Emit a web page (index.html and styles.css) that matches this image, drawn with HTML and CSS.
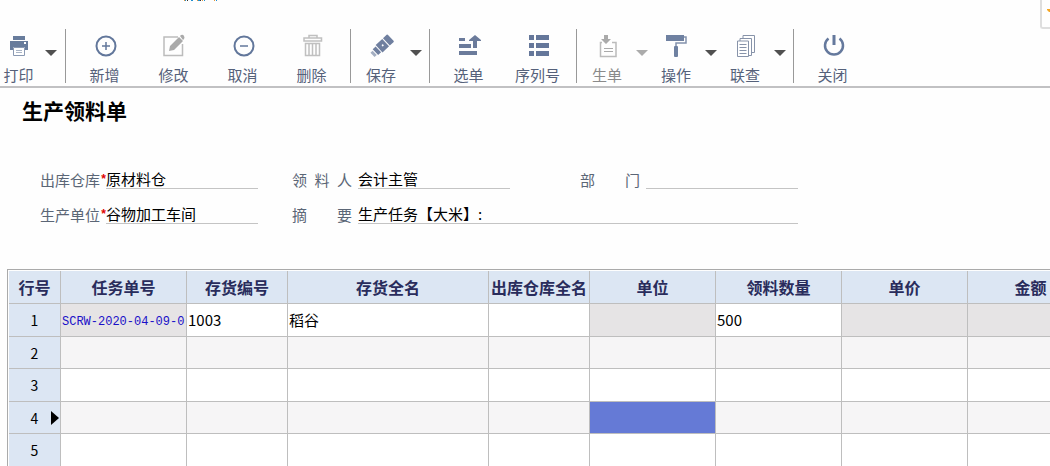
FILE: index.html
```
<!DOCTYPE html>
<html lang="zh-CN">
<head>
<meta charset="utf-8">
<title>生产领料单</title>
<link rel="stylesheet" href="styles.css">
</head>
<body>
<header class="topbar">
  <svg class="crumb" width="36" height="1" viewBox="0 0 36 1" aria-hidden="true"><path fill="#1f8fd0" d="M1 0h1v1h-1zM7 0h2v1h-2zM14 0h2v1h-2zM20 0h1v1h-1zM32 0h1v1h-1z"/><path fill="#333" d="M3 0h1v1h-1zM16 0h1v1h-1z"/><path fill="#e8973a" d="M0 0h1v1h-1zM13 0h1v1h-1zM18 0h1v1h-1zM30 0h1v1h-1z"/></svg>
  <div class="side-tab"><svg width="8" height="27" viewBox="0 0 8 27" aria-hidden="true"><path fill="#f5a623" d="M5 9h3v3H7L5 10z"/></svg></div>
</header>
<nav class="toolbar">
  <div class="group group-first">
    <button class="tool print" type="button"><svg width="26" height="26" viewBox="0 0 26 26"><path fill="#687c9c" d="M7 3h12v4H7zM4 8h18v9h-3v-3H7v3H4z"/><path fill="#fff" d="M18 9h2v2h-2z"/><path fill="#fff" stroke="#8a99b2" d="M7.500 14.500h11v8h-11z"/><path stroke="#a9b4c5" d="M10 17.500h6M10 19.500h6"/></svg>打印</button><button class="caret" type="button" aria-label="打印选项"></button>
  </div>
  <div class="group">
    <button class="tool" type="button"><svg width="26" height="26" viewBox="0 0 26 26" fill="none" stroke="#62779b"><circle cx="14" cy="13" r="9.500" stroke-width="2"/><path stroke-width="1.500" d="M10 13h8M14 9v8"/></svg>新增</button>
    <button class="tool" type="button"><svg width="26" height="26" viewBox="0 0 26 26"><path fill="none" stroke="#bcbcbc" stroke-width="1.500" d="M17 4H3v18.500h18.500V11"/><path fill="#aaa" d="M8 18l1-5 9-9 4 4-9 9zM19 3l1-1q2-1 3 1t0 3l-1 1z"/></svg>修改</button>
    <button class="tool" type="button"><svg width="26" height="26" viewBox="0 0 26 26" fill="none" stroke="#62779b"><circle cx="14" cy="13" r="9.500" stroke-width="2"/><path stroke-width="1.500" d="M10 13h8"/></svg>取消</button>
    <button class="tool" type="button"><svg width="26" height="26" viewBox="0 0 26 26" fill="none" stroke="#c0c0c0"><path stroke-width="1.500" d="M5 5h17.500v3H5zM10 5V2.500h8V5"/><path stroke-width="1.500" d="M6.500 10.500h14v12h-14zM10 10v12M13.500 10v12M17 10v12"/></svg>删除</button>
  </div>
  <div class="group group-split">
    <button class="tool split" type="button"><svg width="26" height="26" viewBox="0 0 26 26"><g transform="translate(14 13) rotate(-43)" fill="#6f7f9f"><path d="M-4-5h9v10h-9zM6-5h5q1 0 1 1v8q0 1-1 1H6zM-9-4h4v8h-4z"/><path fill="#a3aec2" d="M-13-3h3v6h-3z"/><circle r="1" cx="1" fill="#fff"/></g></svg>保存</button><button class="caret" type="button" aria-label="保存选项"></button>
  </div>
  <div class="group">
    <button class="tool" type="button"><svg width="26" height="26" viewBox="0 0 26 26" fill="#6b7b9b"><path d="M3 5h6v3H3zM3 11h12v4H3zM3 18h18v4H3zM13 7l6-5 6 5v1h-4v7h-4V8h-4z"/></svg>选单</button>
    <button class="tool" type="button"><svg width="26" height="26" viewBox="0 0 26 26" fill="#65779a"><path d="M4 2h5v5H4zM11 2h13v5H11zM4 10h5v5H4zM11 10h13v5H11zM4 18h5v5H4zM11 18h13v5H11z"/></svg>序列号</button>
  </div>
  <div class="group group-split">
    <button class="tool split" type="button" disabled><svg width="26" height="26" viewBox="0 0 26 26"><path fill="none" stroke="#bbb" stroke-width="1.500" d="M8 9.500H6.500v14H22v-14h-4"/><path fill="#aaa" d="M10 2h4v4h3l-5 5-5-5h3zM10 15h9v1h-9zM10 18h9v1h-9z"/></svg>生单</button><button class="caret" type="button" disabled aria-label="生单选项"></button>
    <button class="tool split" type="button"><svg width="26" height="26" viewBox="0 0 26 26"><path fill="#6f81a1" d="M3 2h18v6H3z"/><path fill="none" stroke="#8391ac" stroke-width="1.500" d="M21 4h2v6H13v4"/><rect x="11" y="13" width="4" height="11" rx="1" fill="#6f81a1"/></svg>操作</button><button class="caret" type="button" aria-label="操作选项"></button>
    <button class="tool split" type="button"><svg width="26" height="26" viewBox="0 0 26 26" fill="#fff" stroke="#8793a9"><path d="M11 2.500h11.500v17H11z"/><path d="M8 5.500h11.500v17H8z"/><path d="M5.500 8h11v15.500h-11zM7.500 11.500h7M7.500 14.500h7M7.500 17.500h7M7.500 20.500h7"/></svg>联查</button><button class="caret" type="button" aria-label="联查选项"></button>
  </div>
  <div class="group group-last">
    <button class="tool" type="button"><svg width="26" height="26" viewBox="0 0 26 26" fill="none" stroke="#65799d"><path stroke-width="2.500" d="M8.500 5.500a9 9 0 1 0 11 0"/><path stroke-width="3" d="M14 2v10"/></svg>关闭</button>
  </div>
</nav>
<main>
  <h1>生产领料单</h1>
  <form class="fields">
    <label for="wh">出库仓库<span class="req">*</span></label><input id="wh" value="原材料仓">
    <label class="second spread" for="person">领 料 人</label><input id="person" value="会计主管">
    <label class="third spread" for="dept">部 门</label><input id="dept">
    <label for="unit">生产单位<span class="req">*</span></label><input id="unit" value="谷物加工车间">
    <label class="second spread" for="memo">摘 要</label><input class="wide" id="memo" value="生产任务【大米】:">
  </form>
  <div class="grid-wrap">
    <table>
      <colgroup><col class="c-num"><col class="c-mid"><col class="c-small"><col class="c-wide"><col class="c-small"><col class="c-mid"><col class="c-mid"><col class="c-mid"><col class="c-mid"></colgroup>
      <thead><tr><th>行号</th><th>任务单号</th><th>存货编号</th><th>存货全名</th><th>出库仓库全名</th><th>单位</th><th>领料数量</th><th>单价</th><th>金额</th></tr></thead>
      <tbody>
        <tr><th>1</th><td class="locked"><a class="task" href="#">SCRW-2020-04-09-0</a></td><td>1003</td><td>稻谷</td><td></td><td class="locked"></td><td>500</td><td class="locked"></td><td class="locked"></td></tr>
        <tr><th>2</th><td></td><td></td><td></td><td></td><td></td><td></td><td></td><td></td></tr>
        <tr><th>3</th><td></td><td></td><td></td><td></td><td></td><td></td><td></td><td></td></tr>
        <tr><th class="current">4</th><td></td><td></td><td></td><td></td><td class="selected"></td><td></td><td></td><td></td></tr>
        <tr><th>5</th><td></td><td></td><td></td><td></td><td></td><td></td><td></td><td></td></tr>
      </tbody>
    </table>
  </div>
</main>
</body>
</html>
```
FILE: styles.css
```
* { box-sizing: border-box; }
body {
  margin: 0;
  background: #fefefe;
  color: #000;
  font: 15px/20px "Noto Sans CJK SC", sans-serif;
}
button, input { font: inherit; border: 0; background: none; padding: 0; }
.topbar { display: flex; justify-content: space-between; align-items: flex-start; height: 29px; padding-left: 184px; }
.crumb { display: block; }
.side-tab { height: 29px; border: solid #dedede; border-width: 0 0 2px 2px; border-radius: 0 0 0 3px; }
.side-tab svg { display: block; }
.toolbar { display: flex; height: 59px; border-bottom: 2px solid #c1c1c3; }
.group { display: flex; height: 54px; padding: 0 4px; border-right: 1px solid #999; }
.group-first { padding: 0; }
.group-split { padding: 0 0 0 9px; }
.group-last { border: 0; }
.tool { display: flex; flex-direction: column; align-items: center; width: 69px; padding-top: 4px; color: #55617a; gap: 6px; }
.tool svg { display: block; flex: none; }
.print { width: 37px; }
.split { width: 42px; }
.tool:disabled { color: #8a8a8a; }
.caret { display: flex; justify-content: center; width: 27px; padding-top: 21px; }
.print + .caret { width: 28px; }
.caret::before { content: ""; border: solid transparent; border-width: 6px 6px 0; border-top-color: #505050; }
.caret:disabled::before { border-top-color: #ababab; }
h1 { margin: 0; padding: 8px 22px 0; font-size: 21px; line-height: 28px; font-weight: 700; }
.fields {
  display: grid;
  grid-template-columns: 66px 152px 100px 152px 136px 152px;
  row-gap: 14px;
  padding: 44px 0 0 40px;
}
.fields label { display: flex; height: 21px; padding-top: 2px; color: #5b6676; white-space: nowrap; }
.fields .spread { display: block; padding-right: 6px; text-align: justify; text-align-last: justify; white-space: normal; }
.fields .second { padding-left: 34px; }
.fields .third { padding-left: 70px; }
.fields input { width: 100%; height: 21px; border-bottom: 1px solid #c4c4c4; outline: 0; }
.fields .wide { grid-column: span 3; }
.req { color: #e00000; font-family: "Liberation Mono", monospace; font-weight: 700; font-size: 12px; }
.grid-wrap { margin: 45px 0 0 7px; padding: 1px 0 0 1px; border: solid #aaa; border-width: 1px 0 0 1px; overflow: hidden; }
table { width: 1085px; table-layout: fixed; border-collapse: separate; border-spacing: 0; }
.c-num { width: 52px; }
.c-small { width: 101px; }
.c-mid { width: 126px; }
.c-wide { width: 201px; }
th, td { padding: 0; border: solid #bebebe; border-width: 0 1px 1px 0; white-space: nowrap; overflow: hidden; }
th { background: #dce6f3; }
thead th { height: 33px; color: #292c5c; font-size: 16px; font-weight: 700; text-align: center; }
tbody tr { height: 32px; }
tbody tr:nth-child(odd) { height: 33px; }
tbody th { font-size: 14px; font-weight: 400; text-align: center; }
td { padding-left: 1px; background: #fff; }
tbody tr:nth-child(even) td { background: #f6f5f6; }
.task { color: #1a10c8; font: 12px/20px "Liberation Mono", monospace; text-decoration: none; }
tbody .locked { background: #e6e4e5; }
tbody tr .selected, tbody tr:nth-child(even) .selected { background: #657ad6; }
.current { position: relative; }
.current::after { content: ""; position: absolute; right: 1px; top: 9px; border: solid transparent; border-width: 7px 0 7px 8px; border-left-color: #000; }
```
